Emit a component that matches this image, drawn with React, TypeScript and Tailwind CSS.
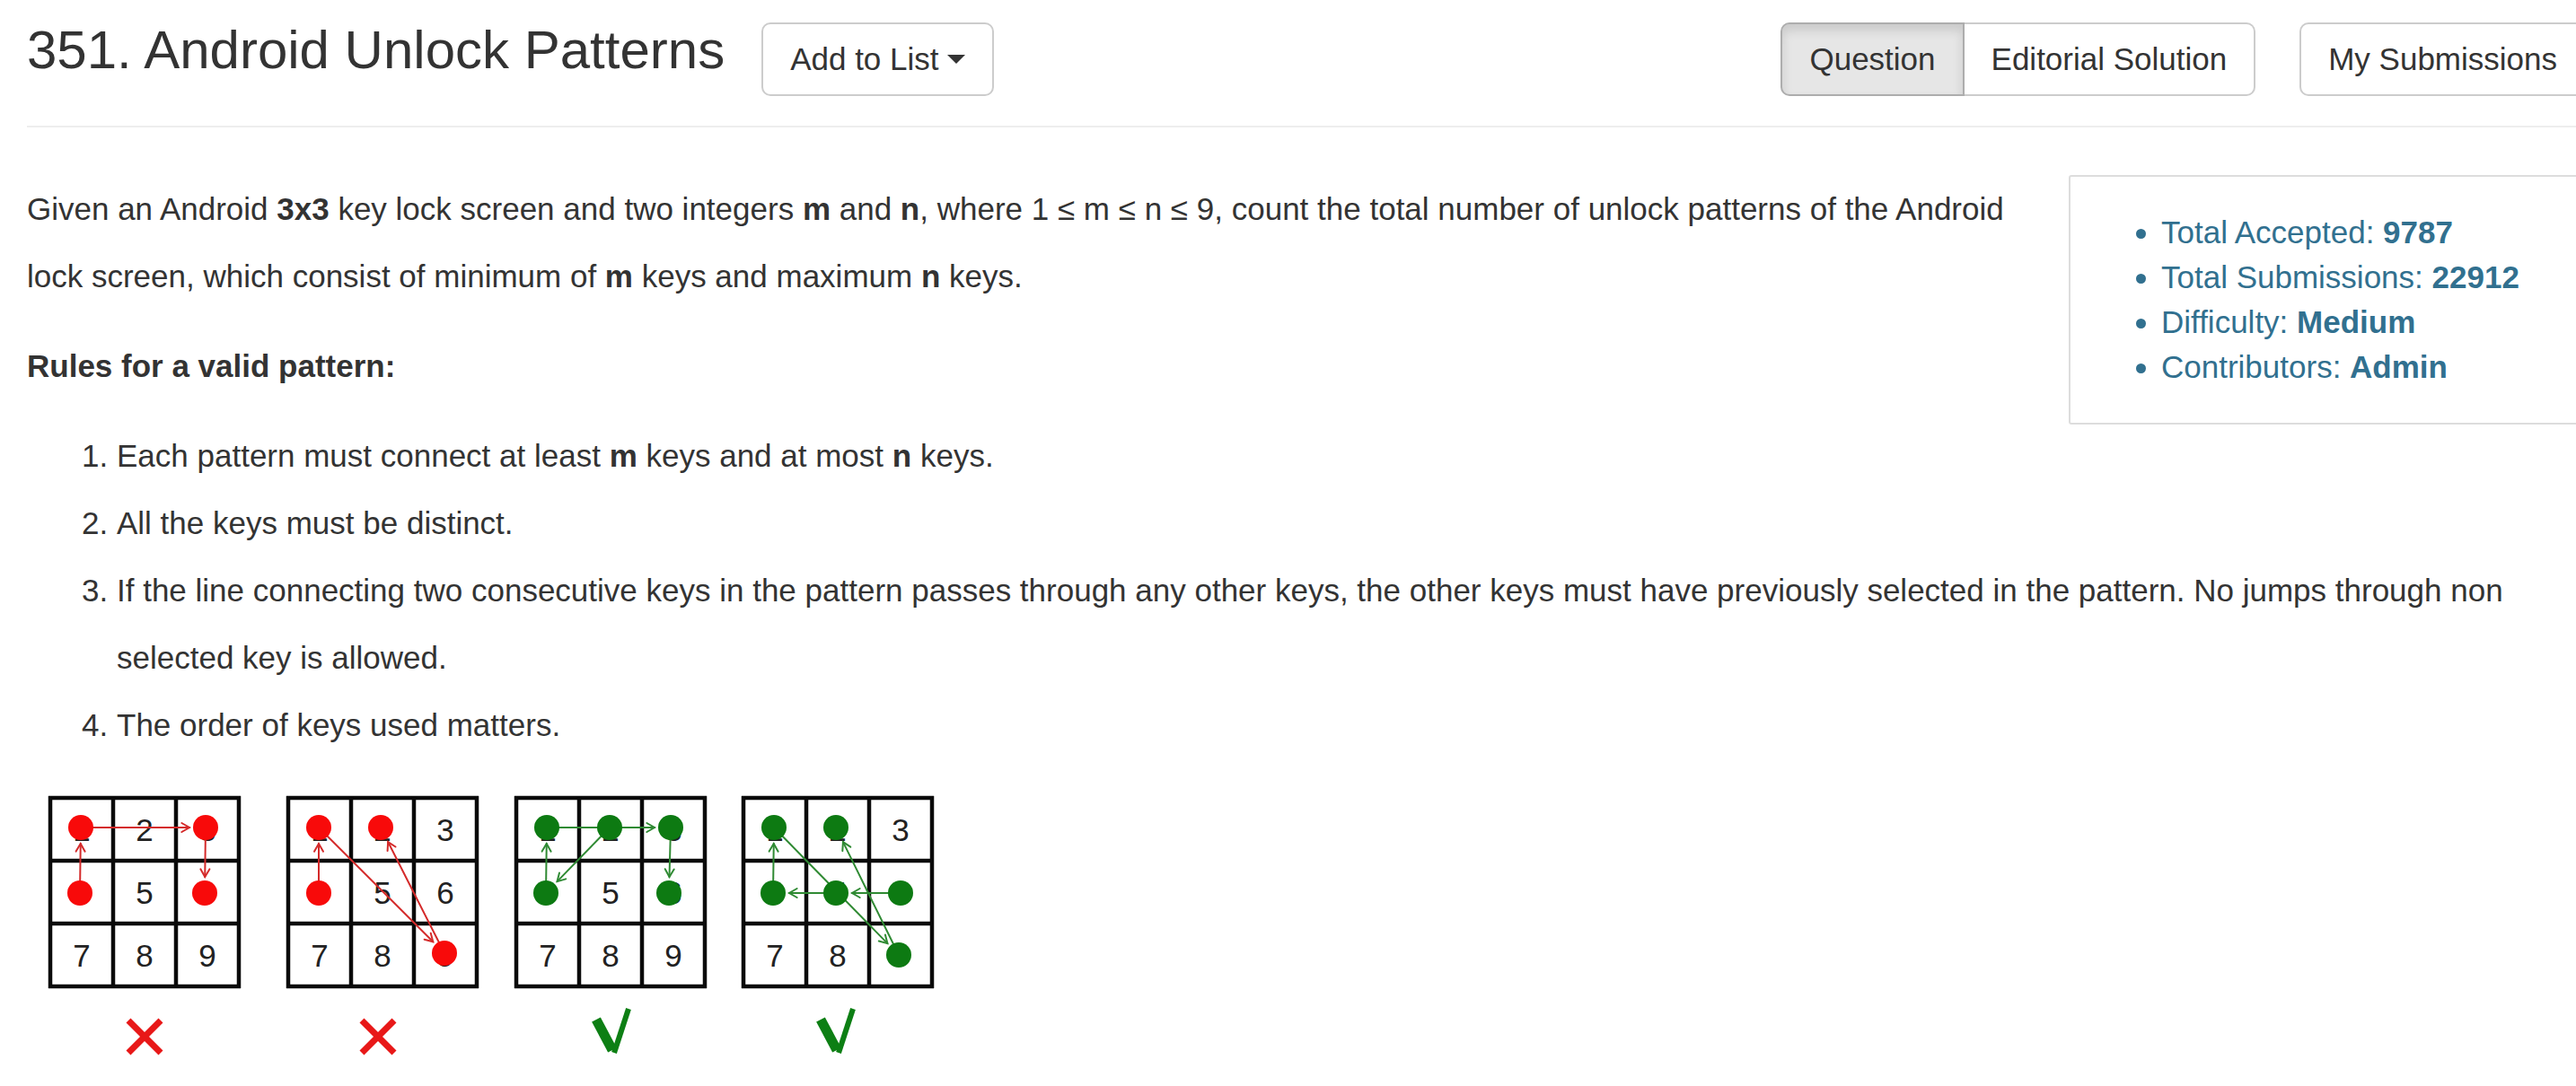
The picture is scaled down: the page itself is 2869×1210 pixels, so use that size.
import React from "react";

type Pt = [number, number];
type GridSpec = {
  x: number;
  color: string;
  line: string;
  dots: Pt[];
  arrows: [Pt, Pt, boolean?][];
};

const C = [37, 107, 177];
const R = 14;

function Arrow({ a, b, color, head = true }: { a: Pt; b: Pt; color: string; head?: boolean }) {
  const dx = b[0] - a[0];
  const dy = b[1] - a[1];
  const len = Math.sqrt(dx * dx + dy * dy);
  const ux = dx / len;
  const uy = dy / len;
  const off = R + 4;
  const tx = b[0] - ux * off;
  const ty = b[1] - uy * off;
  const hl = 10;
  const ang = Math.PI / 6;
  const rot = (x: number, y: number, t: number): Pt => [x * Math.cos(t) - y * Math.sin(t), x * Math.sin(t) + y * Math.cos(t)];
  const h1 = rot(-ux * hl, -uy * hl, ang);
  const h2 = rot(-ux * hl, -uy * hl, -ang);
  return (
    <g stroke={color} strokeWidth={2} fill="none" strokeLinecap="round">
      <line x1={a[0]} y1={a[1]} x2={head ? tx : b[0]} y2={head ? ty : b[1]} />
      {head && (
        <polyline points={`${tx + h1[0]},${ty + h1[1]} ${tx},${ty} ${tx + h2[0]},${ty + h2[1]}`} />
      )}
    </g>
  );
}

function Grid({ spec }: { spec: GridSpec }) {
  const nums = [1, 2, 3, 4, 5, 6, 7, 8, 9];
  return (
    <g transform={`translate(${spec.x},17)`}>
      <rect x={0} y={0} width={214} height={214} fill="#fff" />
      {nums.map((n) => {
        const r = Math.floor((n - 1) / 3);
        const c = (n - 1) % 3;
        return (
          <text
            key={n}
            x={C[c]}
            y={C[r] + 13}
            textAnchor="middle"
            fontSize={35}
            fontFamily="'Liberation Sans', Arial, sans-serif"
            fill="#222"
          >
            {n}
          </text>
        );
      })}
      {[2, 72, 142, 212].map((p) => (
        <g key={p}>
          <line x1={p} y1={0} x2={p} y2={214} stroke="#0a0a0a" strokeWidth={4.5} />
          <line x1={0} y1={p} x2={214} y2={p} stroke="#0a0a0a" strokeWidth={4.5} />
        </g>
      ))}
      {spec.arrows.map(([a, b, noHead], i) => (
        <Arrow key={i} a={a} b={b} color={spec.line} head={!noHead} />
      ))}
      {spec.dots.map((d, i) => (
        <circle key={i} cx={d[0]} cy={d[1]} r={R} fill={spec.color} />
      ))}
    </g>
  );
}

const RED = "#f80a0a";
const REDL = "#d42a2a";
const GREEN = "#0d7a12";
const GREENL = "#2f8a33";

const g1: GridSpec = {
  x: 24,
  color: RED,
  line: REDL,
  dots: [
    [36, 35],
    [175, 35],
    [35, 108],
    [174, 108],
  ],
  arrows: [
    [[35, 108], [36, 35]],
    [[36, 35], [175, 35]],
    [[175, 35], [174, 108]],
  ],
};

const g2: GridSpec = {
  x: 289,
  color: RED,
  line: REDL,
  dots: [
    [36, 35],
    [105, 35],
    [36, 108],
    [176, 175],
  ],
  arrows: [
    [[36, 108], [36, 35]],
    [[36, 35], [176, 175]],
    [[176, 175], [105, 35]],
  ],
};

const g3: GridSpec = {
  x: 543,
  color: GREEN,
  line: GREENL,
  dots: [
    [36, 35],
    [106, 35],
    [174, 35],
    [35, 108],
    [172, 108],
  ],
  arrows: [
    [[35, 108], [36, 35]],
    [[36, 35], [106, 35], true],
    [[106, 35], [174, 35]],
    [[174, 35], [172, 108]],
    [[106, 35], [35, 108]],
  ],
};

const g4: GridSpec = {
  x: 796,
  color: GREEN,
  line: GREENL,
  dots: [
    [36, 35],
    [105, 35],
    [35, 108],
    [105, 108],
    [177, 108],
    [175, 177],
  ],
  arrows: [
    [[35, 108], [36, 35]],
    [[36, 35], [175, 177]],
    [[175, 177], [105, 35]],
    [[177, 108], [105, 108]],
    [[105, 108], [35, 108]],
  ],
};

function Figure() {
  const xMark = (cx: number) => (
    <g stroke="#e81818" strokeWidth={7} strokeLinecap="butt">
      <line x1={cx - 18} y1={267} x2={cx + 18} y2={303} />
      <line x1={cx + 18} y1={267} x2={cx - 18} y2={303} />
    </g>
  );
  const check = (dx: number) => (
    <g fill="none" stroke="#0d7f14" strokeLinejoin="miter">
      <line x1={634 + dx} y1={266} x2={652 + dx} y2={300} strokeWidth={11} />
      <line x1={654 + dx} y1={303} x2={670 + dx} y2={254} strokeWidth={6} />
    </g>
  );
  return (
    <svg width={1040} height={330} viewBox="0 0 1040 330" className="block">
      <Grid spec={g1} />
      <Grid spec={g2} />
      <Grid spec={g3} />
      <Grid spec={g4} />
      {xMark(131)}
      {xMark(391)}
      {check(0)}
      {check(250)}
    </svg>
  );
}

function Btn({ children, className = "" }: { children: React.ReactNode; className?: string }) {
  return (
    <div className={`flex h-[82px] items-center border-2 px-[30px] text-[35px] text-[#333] ${className}`}>
      {children}
    </div>
  );
}

export default function App() {
  return (
    <div className="w-[2869px] h-[1210px] overflow-hidden bg-white font-['Liberation_Sans',Arial,sans-serif] text-[#333]">
      <div className="w-[2880px] pl-[30px]">
        <div className="flex items-start pt-[25px]">
          <h3 className="mt-[1px] text-[60px] leading-[60px] font-normal whitespace-nowrap">351. Android Unlock Patterns</h3>
          <Btn className="ml-[41px] rounded-[10px] border-[#ccc] bg-white">
            Add to List
            <span className="ml-[9px] inline-block h-0 w-0 border-x-[10px] border-t-[10px] border-x-transparent border-t-[#333]" />
          </Btn>
          <div className="ml-auto flex gap-[49px]">
            <div className="flex">
              <Btn className="rounded-l-[10px] border-[#adadad] bg-[#e6e6e6] shadow-[inset_0_7px_12px_rgba(0,0,0,0.125)]">
                Question
              </Btn>
              <Btn className="rounded-r-[10px] border-l-0 border-[#ccc] bg-white">Editorial Solution</Btn>
            </div>
            <Btn className="rounded-[10px] border-[#ccc] bg-white">My Submissions</Btn>
          </div>
        </div>
        <div className="mt-[33px] h-[2px] bg-[#eee]" />
        <div className="mt-[53px]">
          <div className="float-right ml-[30px] w-[576px] rounded-[3px] border-2 border-[#ddd] p-[37px]">
            <ul className="list-disc pl-[64px] text-[35px] leading-[50px] text-[#31708f]">
              <li>
                Total Accepted: <b>9787</b>
              </li>
              <li>
                Total Submissions: <b>22912</b>
              </li>
              <li>
                Difficulty: <b>Medium</b>
              </li>
              <li>
                Contributors: <b>Admin</b>
              </li>
            </ul>
          </div>
          <p className="mb-[25px] text-[35px] leading-[75px]">
            Given an Android <b>3x3</b> key lock screen and two integers <b>m</b> and <b>n</b>, where 1 ≤ m ≤ n ≤ 9, count
            the total number of unlock patterns of the Android lock screen, which consist of minimum of <b>m</b> keys and
            maximum <b>n</b> keys.
          </p>
          <p className="mb-[25px] text-[35px] leading-[75px]">
            <b>Rules for a valid pattern:</b>
          </p>
          <ol className="mb-0 list-decimal pl-[100px] text-[35px] leading-[75px]">
            <li>
              Each pattern must connect at least <b>m</b> keys and at most <b>n</b> keys.
            </li>
            <li>All the keys must be distinct.</li>
            <li>
              If the line connecting two consecutive keys in the pattern passes through any other keys, the other keys must
              have previously selected in the pattern. No jumps through non selected key is allowed.
            </li>
            <li>The order of keys used matters.</li>
          </ol>
          <div className="mt-[25px]">
            <Figure />
          </div>
        </div>
      </div>
    </div>
  );
}
